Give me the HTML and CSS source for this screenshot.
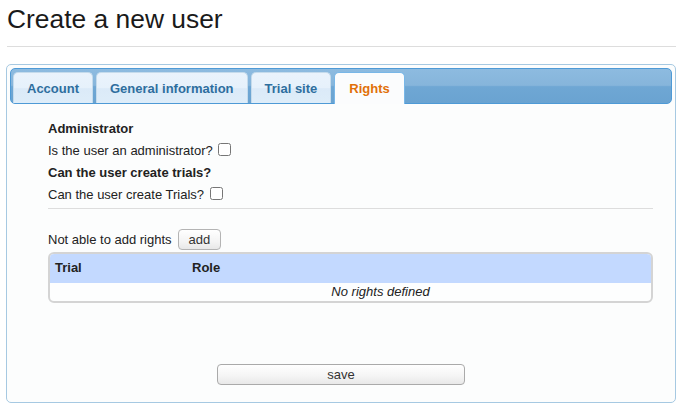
FILE: index.html
```html
<!DOCTYPE html>
<html>
<head>
<meta charset="utf-8">
<link rel="stylesheet" href="styles.css">
</head>
<body>
<div class="page">
  <h1 class="title">Create a new user</h1>
  <div class="rule"></div>
  <div class="widget">
    <ul class="nav">
      <li class="tab">Account</li>
      <li class="tab">General information</li>
      <li class="tab">Trial site</li>
      <li class="tab active">Rights</li>
    </ul>
    <div class="panel">
      <div class="section">
        <div class="row bold">Administrator</div>
        <div class="row">Is the user an administrator? <input type="checkbox" class="chk"></div>
        <div class="row bold">Can the user create trials?</div>
        <div class="row">Can the user create Trials? <input type="checkbox" class="chk"></div>
        <div class="sep"></div>
        <div class="addrow">
          <span>Not able to add rights</span>
          <button class="btn add">add</button>
        </div>
        <div class="grid">
          <div class="ghead">
            <div class="c1">Trial</div>
            <div class="c2">Role</div>
          </div>
          <div class="gempty">No rights defined</div>
        </div>
      </div>
      <div class="footer">
        <button class="btn save">save</button>
      </div>
    </div>
  </div>
</div>
</body>
</html>
```
FILE: styles.css
```css
html, body {
  margin: 0;
  padding: 0;
  background: #ffffff;
}
body {
  font-family: "Liberation Sans", Arial, sans-serif;
  font-size: 13px;
  color: #222222;
}
.page {
  padding: 0 8px 0 6px;
  width: 670px;
}
.title {
  margin: 4px 0 0 1px;
  font-size: 26.4px;
  line-height: 30px;
  font-weight: normal;
  color: #1a1a1a;
}
.rule {
  margin: 12px 0 0 1px;
  height: 1px;
  background: #dddddd;
}
.widget {
  margin-top: 17px;
  border: 1px solid #a6c9e2;
  border-radius: 5px;
  padding: 3px;
  background: #fcfdfd;
}
.nav {
  list-style: none;
  margin: 0;
  padding: 3px 2px 0 2px;
  display: flex;
  align-items: flex-end;
  border: 1px solid #4e9ad6;
  border-radius: 5px;
  background: linear-gradient(to bottom, #8dbbe0 0%, #86b5db 48%, #6fa7d4 52%, #6aa3d1 100%);
}
.tab {
  margin: 0 3px 0 0;
  padding: 8px 13px 7px;
  line-height: 15px;
  font-weight: bold;
  color: #2e6e9e;
  border: 1px solid #c5dbec;
  border-bottom: 0;
  border-radius: 5px 5px 0 0;
  background: linear-gradient(to bottom, #eaf3fc 0%, #e6f1fb 50%, #dbeaf8 52%, #deedf9 100%);
}
.tab.active {
  color: #e17009;
  border-color: #79b7e7;
  background: #fbfcfd;
  margin-bottom: -1px;
  padding: 8px 14px;
}
.panel {
  padding: 14px 0 14px 0;
}
.section {
  margin: 0 19px 0 38px;
}
.row {
  line-height: 22px;
  height: 22px;
}
.bold {
  font-weight: bold;
}
.chk {
  margin: 0 0 0 2px;
  width: 13px;
  height: 13px;
  vertical-align: -1px;
}
.sep {
  margin-top: 2px;
  height: 1px;
  background: #dddddd;
}
.addrow {
  margin-top: 20px;
  display: flex;
  align-items: center;
  gap: 6px;
  line-height: 15px;
}
.btn {
  font-family: "Liberation Sans", Arial, sans-serif;
  font-size: 13px;
  line-height: 15px;
  color: #333333;
  border: 1px solid #b4b4b4;
  border-radius: 4px;
  background: linear-gradient(to bottom, #ffffff 0%, #f4f4f4 60%, #e8e8e8 100%);
  margin: 0;
}
.add {
  padding: 2px 10px;
  height: 21px;
}
.grid {
  margin-top: 2px;
  border: 2px solid #d4d4d4;
  border-radius: 6px;
  overflow: hidden;
  background: #fdfefe;
}
.ghead {
  display: flex;
  background: #c3d9ff;
  font-weight: bold;
  line-height: 15px;
  padding: 6px 0 8px;
}
.c1 {
  width: 142px;
  padding-left: 5px;
  box-sizing: border-box;
}
.gempty {
  font-style: italic;
  text-align: center;
  line-height: 15px;
  padding: 1px 0 2px 60px;
}
.footer {
  margin-top: 61px;
  display: flex;
  justify-content: center;
}
.save {
  width: 248px;
  height: 21px;
  padding: 2px 0;
  border-color: #aaaaaa;
}
```
